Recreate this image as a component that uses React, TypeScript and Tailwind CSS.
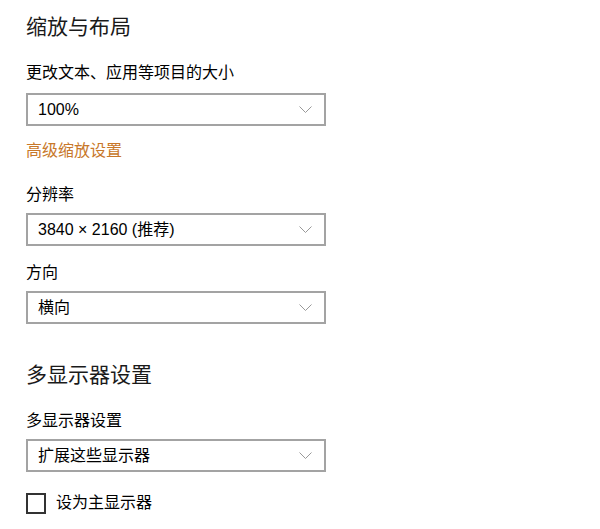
const font = { fontFamily: '"Liberation Sans", "Noto Sans CJK SC", sans-serif' };

function Chevron() {
  return (
    <svg width="13" height="7" viewBox="0 0 13 7" fill="none" className="shrink-0">
      <path d="M0.5 0.5 L6.5 6.5 L12.5 0.5" stroke="#999999" strokeWidth="1" />
    </svg>
  );
}

function Select({ value, className }: { value: string; className?: string }) {
  return (
    <div
      className={`flex h-[33px] w-[300px] items-center justify-between border-2 border-[#a3a3a3] bg-white pl-[10px] pr-[12px] ${className ?? ''}`}
    >
      <span className="text-[16px] leading-[22px] text-black">{value}</span>
      <Chevron />
    </div>
  );
}

export default function App() {
  return (
    <div className="min-h-[529px] w-[600px] bg-white pl-[26px] pt-[13px]" style={font}>
      <h2 className="text-[21px] leading-[28px] font-normal text-[#1a1a1a]">缩放与布局</h2>

      <p className="mt-[21px] text-[16px] leading-[22px] text-black">更改文本、应用等项目的大小</p>
      <Select value="100%" className="mt-[9px]" />

      <p className="mt-[14px] text-[16px] leading-[22px] text-[#c8782a]">高级缩放设置</p>

      <p className="mt-[22px] text-[16px] leading-[22px] text-black">分辨率</p>
      <Select value="3840 × 2160 (推荐)" className="mt-[7px]" />

      <p className="mt-[16px] text-[16px] leading-[22px] text-black">方向</p>
      <Select value="横向" className="mt-[7px]" />

      <h2 className="mt-[37px] text-[21px] leading-[28px] font-normal text-[#1a1a1a]">多显示器设置</h2>

      <p className="mt-[21px] text-[16px] leading-[22px] text-black">多显示器设置</p>
      <Select value="扩展这些显示器" className="mt-[7px]" />

      <label className="mt-[20px] flex items-center gap-[10px]">
        <span className="h-[21px] w-[20px] border-2 border-[#333333] bg-white" />
        <span className="text-[16px] leading-[22px] text-black">设为主显示器</span>
      </label>
    </div>
  );
}
